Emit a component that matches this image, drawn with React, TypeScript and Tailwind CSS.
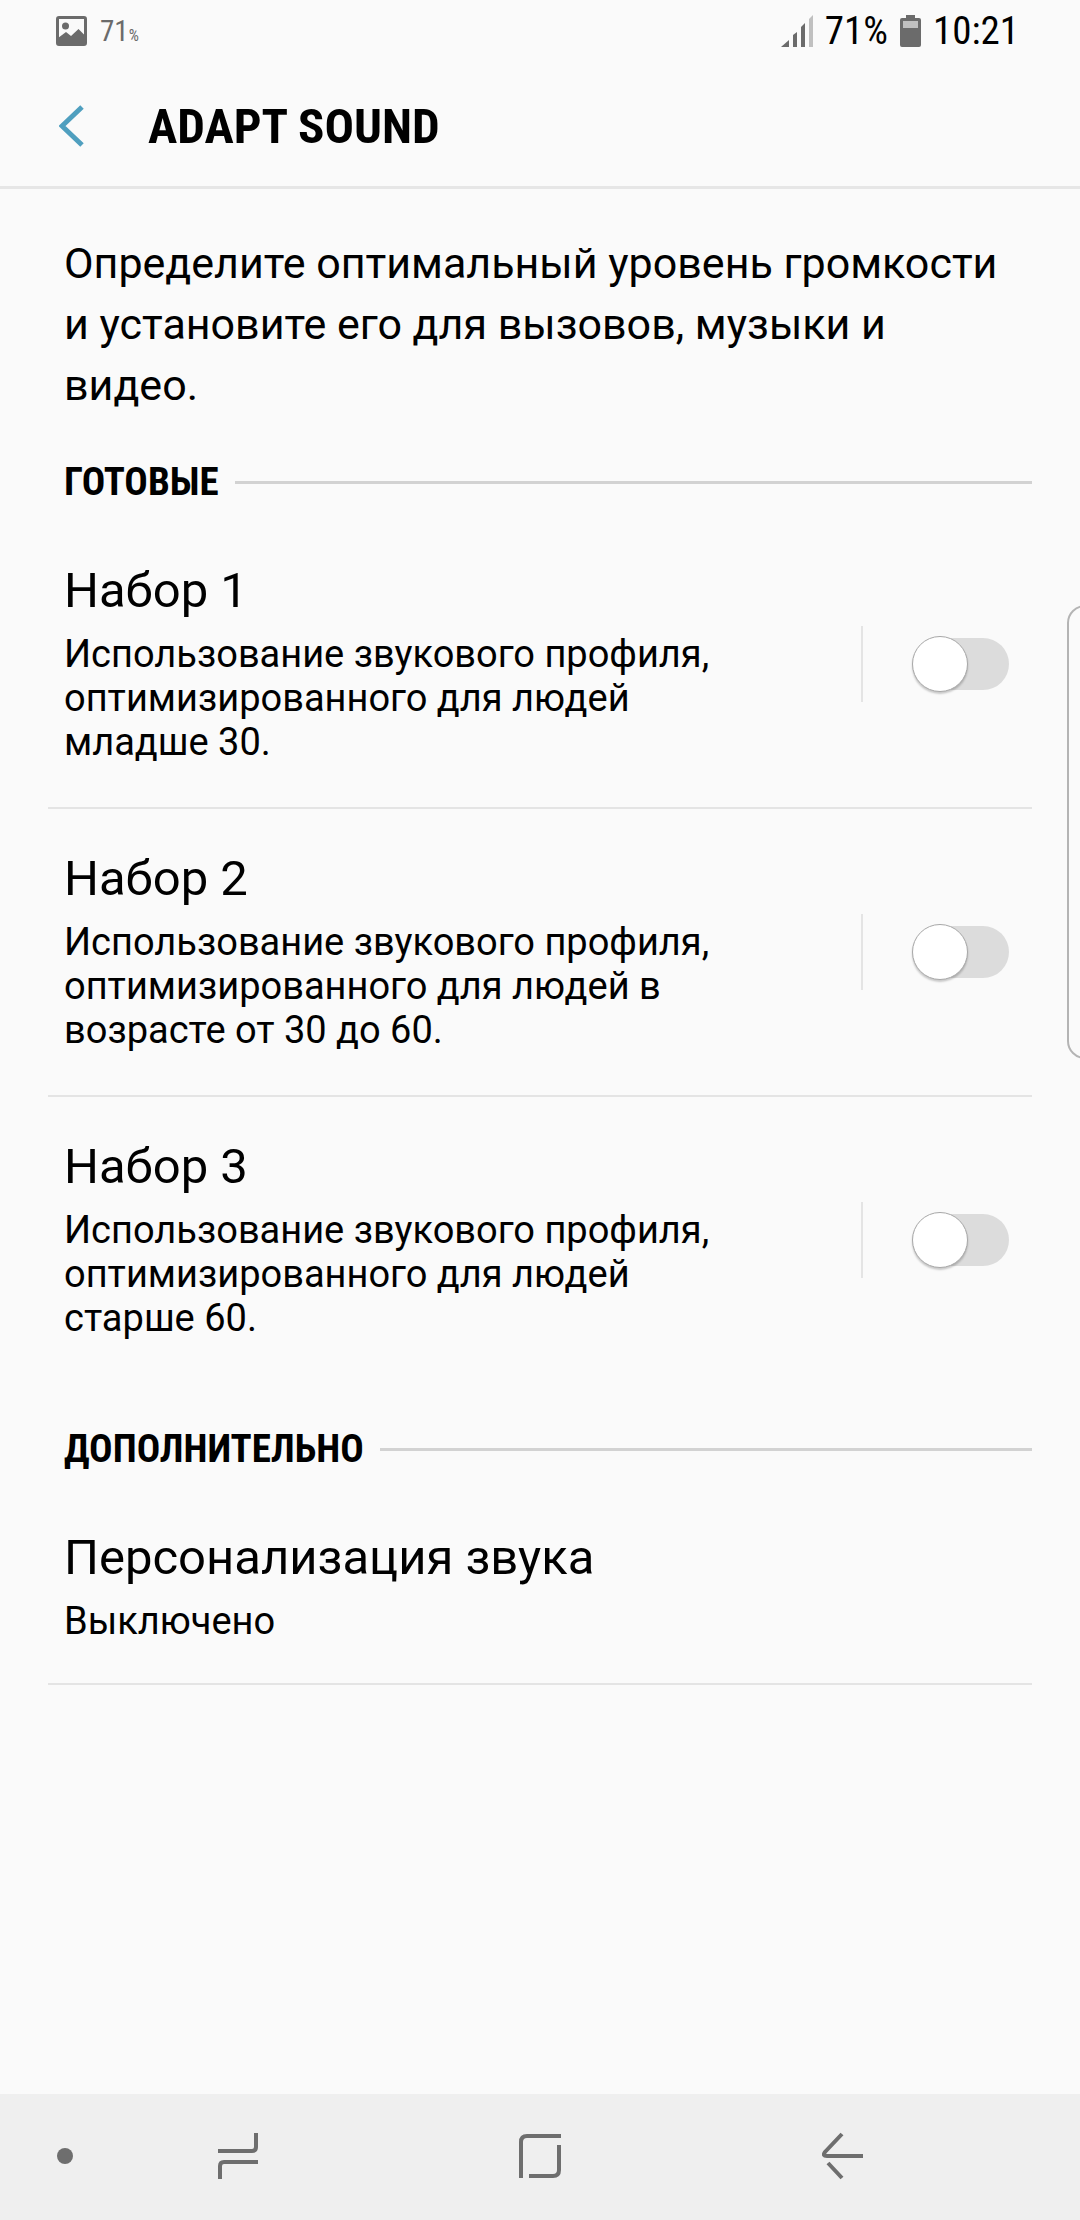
import * as React from 'react';

interface Preset {
    id: string;
    title: string;
    description: string;
}

const presets: Preset[] = [
    { id: 'preset-1', title: 'Набор 1', description: 'Использование звукового профиля, оптимизированного для людей младше 30.' },
    { id: 'preset-2', title: 'Набор 2', description: 'Использование звукового профиля, оптимизированного для людей в возрасте от 30 до 60.' },
    { id: 'preset-3', title: 'Набор 3', description: 'Использование звукового профиля, оптимизированного для людей старше 60.' },
];

const StatusBar: React.FunctionComponent = () => {
    return (
        <div className="flex h-[66px] items-start justify-between pt-[14px] pr-[61px] pl-14 font-['Roboto_Condensed','Liberation_Sans_Narrow','Roboto',sans-serif]">
            <div className="flex items-center gap-3 text-[#6b6b6b]">
                <svg className="h-8 w-8" viewBox="0 0 32 32" fill="none">
                    <rect x="1.5" y="2.5" width="28" height="27" rx="1.5" stroke="currentColor" strokeWidth="3" />
                    <circle cx="9.5" cy="11" r="3.5" fill="currentColor" />
                    <path d="M2 23l8-6 5 4 7.500-7 7 7v8H2z" fill="currentColor" />
                </svg>
                <span className="text-[29px] leading-[34px]">
                    71<span className="text-base">%</span>
                </span>
            </div>
            <div className="flex items-center gap-3 text-[39px] leading-[34px] text-black">
                <svg className="h-8 w-8" viewBox="0 0 32 32">
                    <path d="M0 32l8-7v7z" fill="#6b6b6b" />
                    <path d="M12 20l4-3v15h-4z" fill="#6b6b6b" />
                    <path d="M20 12l4-4v24h-4z" fill="#6b6b6b" />
                    <path d="M28 4l4-4v32h-4z" fill="#c0c0c0" />
                </svg>
                <span>71%</span>
                <svg className="h-8 w-[21px]" viewBox="0 0 21 32">
                    <path d="M6 0h9v3h4a2 2 0 0 1 2 2v25a2 2 0 0 1-2 2H2a2 2 0 0 1-2-2V5a2 2 0 0 1 2-2h4z" fill="#6b6b6b" />
                    <path d="M3 6h15v7H3z" fill="#c0c0c0" />
                </svg>
                <span>10:21</span>
            </div>
        </div>
    );
};

const SectionTitle: React.FunctionComponent<{ children: React.ReactNode }> = ({ children }) => {
    return (
        <div className="flex items-center gap-4 pt-[43px] pr-12 pb-4 pl-16">
            <h2 className="font-['Roboto_Condensed','Liberation_Sans_Narrow','Roboto',sans-serif] text-[39px] leading-[46px] font-bold">{children}</h2>
            <div className="h-[3px] flex-1 bg-[#d2d2d2]"></div>
        </div>
    );
};

const PresetRow: React.FunctionComponent<{ preset: Preset; last: boolean }> = ({ preset, last }) => {
    const [checked, setChecked] = React.useState(false);

    return (
        <div className={`mr-12 ml-12 flex items-center border-[#e4e4e4] pr-[23px] pl-4 ${last ? '' : 'border-b-2'}`}>
            <div className="flex-1 pt-10 pr-[110px] pb-[43px]">
                <label htmlFor={preset.id} className="block text-[49px] leading-[60px]">
                    {preset.title}
                </label>
                <p className="mt-[11px] text-[38px] leading-[44px]">{preset.description}</p>
            </div>
            <div className="h-[76px] w-[2px] bg-[#e4e4e4]"></div>
            <div className="relative ml-[49px] h-14 w-[97px]">
                <input
                    id={preset.id}
                    type="checkbox"
                    role="switch"
                    checked={checked}
                    onChange={() => setChecked(!checked)}
                    className="peer absolute inset-0 z-10 h-full w-full cursor-pointer opacity-0"
                />
                <div className="my-[2px] ml-1 h-[52px] rounded-full bg-[#dcdcdc] peer-checked:bg-[#4f9fbf]"></div>
                <div className="absolute top-0 left-0 h-14 w-14 rounded-full border border-[#a8a8a8] bg-white shadow-[0_2px_2px_rgba(0,0,0,0.2)] duration-300 peer-checked:translate-x-[41px]"></div>
            </div>
        </div>
    );
};

const NavigationBar: React.FunctionComponent = () => {
    return (
        <nav className="mt-auto flex h-[126px] items-center bg-[#efefef] pb-[2px] text-[#6e6e6e]">
            <div className="flex w-[12%] justify-center">
                <button aria-label="Скрыть панель" className="h-4 w-4 rounded-full bg-[#6e6e6e]"></button>
            </div>
            <div className="flex w-[20%] justify-center">
                <button aria-label="Последние">
                    <svg className="h-12 w-10" viewBox="2 0 40 48" fill="none" stroke="currentColor" strokeWidth="4">
                        <path d="M40 1v14q0 4-4 4H2M4 47V34q0-4 4-4h34" />
                    </svg>
                </button>
            </div>
            <div className="flex w-[36%] justify-center">
                <button aria-label="Главный экран">
                    <svg className="h-11 w-[42px]" viewBox="0 0 42 44" fill="none" stroke="currentColor" strokeWidth="4">
                        <path d="M2 44V8q0-6 6-6h34M40 11v25q0 6-6 6H10" />
                    </svg>
                </button>
            </div>
            <div className="flex w-[20%] justify-center">
                <button aria-label="Назад">
                    <svg className="h-12 w-[41px]" viewBox="0 0 41 48" fill="none" stroke="currentColor" strokeWidth="4">
                        <path d="M20 2L3 20q-3 4 2 4h36M6 31l14 15" />
                    </svg>
                </button>
            </div>
        </nav>
    );
};

const App: React.FunctionComponent = () => {
    return (
        <div className="relative flex min-h-screen flex-col overflow-hidden bg-[#fafafa] font-['Roboto',sans-serif] text-black">
            <StatusBar />
            <header className="flex h-[123px] items-center border-b-[3px] border-[#e6e6e6] pl-[59px]">
                <button aria-label="Вверх" className="w-[89px] text-[#4f9fbf]">
                    <svg className="h-[42px] w-[26px]" viewBox="0 0 26 42" fill="none" stroke="currentColor" strokeWidth="5">
                        <path d="M23 2L3 21l20 19" />
                    </svg>
                </button>
                <h1 className="pt-[2px] font-['Roboto_Condensed','Liberation_Sans_Narrow','Roboto',sans-serif] text-[49px] leading-[60px] font-bold">
                    ADAPT SOUND
                </h1>
            </header>
            <main>
                <p className="px-16 pt-11 text-[43px] leading-[61px]">
                    Определите оптимальный уровень громкости и установите его для вызовов, музыки и видео.
                </p>
                <SectionTitle>ГОТОВЫЕ</SectionTitle>
                {presets.map((preset, index) => (
                    <PresetRow key={preset.id} preset={preset} last={index === presets.length - 1} />
                ))}
                <SectionTitle>ДОПОЛНИТЕЛЬНО</SectionTitle>
                <a href="#personal" className="mr-12 ml-12 block border-b-2 border-[#e4e4e4] pt-10 pb-10 pl-4">
                    <span className="block text-[49px] leading-[60px]">Персонализация звука</span>
                    <span className="mt-[11px] block text-[38px] leading-[44px]">Выключено</span>
                </a>
            </main>
            {/* edge panel handle, partly off screen */}
            <div className="absolute top-[605px] -right-[27px] h-[454px] w-10 rounded-[18px] border-2 border-[#b4b4b4]"></div>
            <NavigationBar />
        </div>
    );
};

export default App;
